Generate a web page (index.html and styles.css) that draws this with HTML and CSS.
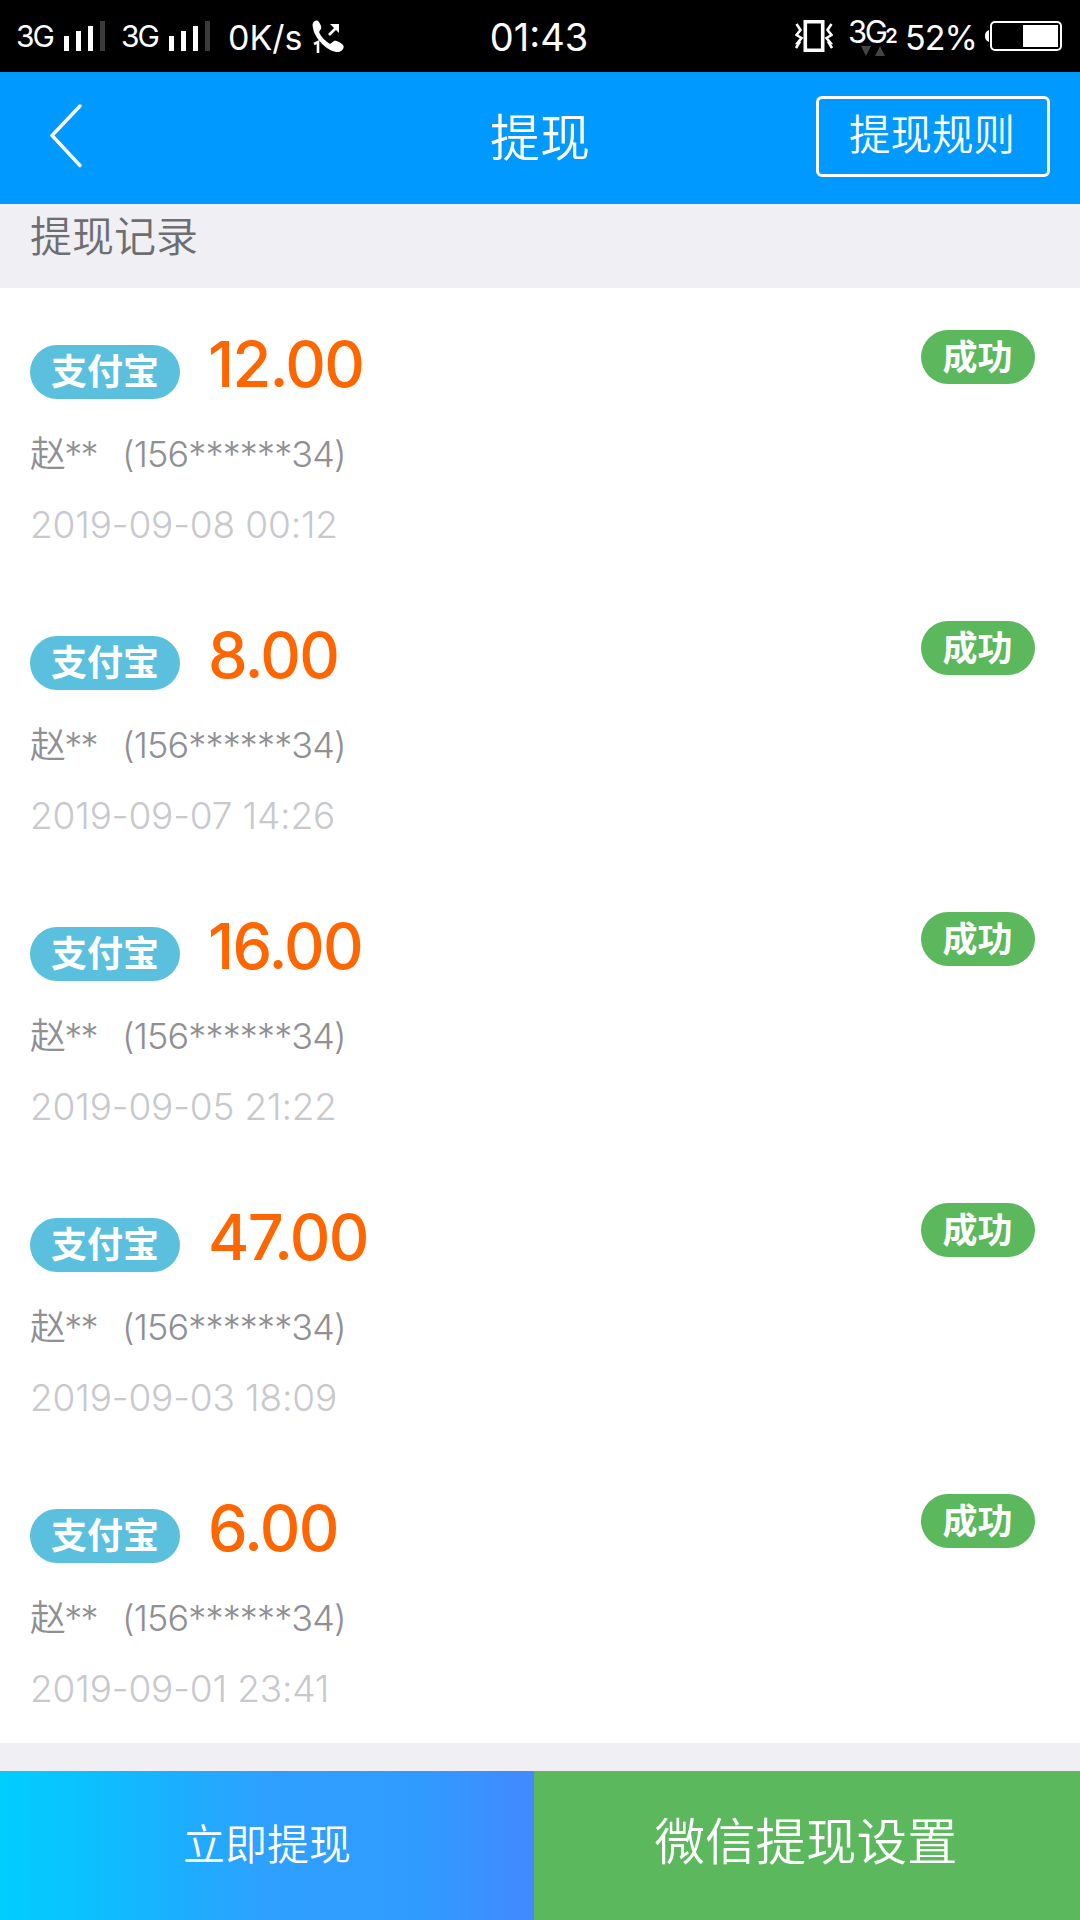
FILE: index.html
```html
<!DOCTYPE html>
<html lang="zh-CN">
<head>
<meta charset="utf-8">
<title>提现</title>
<link rel="stylesheet" href="styles.css">
</head>
<body>
<div class="status">
  <div class="status-left">
    <span class="net">3G</span>
    <svg class="bars" width="42" height="30" viewBox="0 0 42 30"><path fill="#fff" d="M0 15h5v15H0zM12 10h5v20h-5zM24 5h5v25h-5z"/><path fill="#3a3a3a" d="M36 0h5v30h-5z"/></svg>
    <span class="net">3G</span>
    <svg class="bars" width="42" height="30" viewBox="0 0 42 30"><path fill="#fff" d="M0 15h5v15H0zM12 10h5v20h-5zM24 5h5v25h-5z"/><path fill="#3a3a3a" d="M36 0h5v30h-5z"/></svg>
    <span class="speed">0K/s</span>
    <svg class="call" width="33" height="34" viewBox="0 0 33 34"><path fill="#fff" d="M1 3C2 1 4 0 6 1c2 2 4 6 3 8l-2 3c2 5 6 9 11 12l4-3c2-1 7 2 9 4 2 3-1 6-4 7C18 33 6 22 2 12 1 8 0 5 1 3z"/><path fill="none" stroke="#fff" stroke-width="2.6" d="M17 15l7-7"/><path fill="#fff" d="M18 4h9v9z"/><path fill="none" stroke="#fff" stroke-width="2.6" d="M2 24l4-2v11"/></svg>
  </div>
  <span class="clock">01:43</span>
  <div class="status-right">
    <svg class="vibrate" width="38" height="32" viewBox="0 0 38 32"><path fill="none" stroke="#fff" stroke-width="3.6" d="M10.3 1.8h17.4v28.4H10.3z"/><path fill="none" stroke="#fff" stroke-width="2.6" d="M1.500 4l4 6-4 5 5 3-4 5 1.500 0-3 5M36.500 4l-4 6 4 5-5 3 4 5-1.500 0 3 5"/></svg>
    <div class="sim"><span>3G</span><b>2</b><svg class="traffic" width="24" height="10" viewBox="0 0 24 10"><path fill="#444" d="M0 0h10L5 10zM14 10h10L19 0z"/></svg></div>
    <span class="percent">52%</span>
    <svg class="battery" width="77" height="32" viewBox="0 0 77 32"><rect x="6" y="2" width="70" height="28" rx="4" fill="none" stroke="#fff" stroke-width="2"/><path fill="#fff" d="M4 10v12C1 21 0 19 0 16s1-5 4-6zM38 5h35v22H38z"/></svg>
  </div>
</div>
<header class="nav">
  <svg class="back" width="34" height="64" viewBox="0 0 34 64"><path d="M31 2L3 31.500l28 30" fill="none" stroke="#fff" stroke-width="3.400" stroke-linecap="round"/></svg>
  <h1 class="title">提现</h1>
  <button class="rules">提现规则</button>
</header>
<h2 class="section">提现记录</h2>
<main class="records">
  <article class="record"><div class="line"><span class="badge pay">支付宝</span><span class="amount">12.00</span><span class="badge ok">成功</span></div><p class="account"><span class="name">赵**</span><span>(156******34)</span></p><time class="date">2019-09-08 00:12</time></article>
  <article class="record"><div class="line"><span class="badge pay">支付宝</span><span class="amount">8.00</span><span class="badge ok">成功</span></div><p class="account"><span class="name">赵**</span><span>(156******34)</span></p><time class="date">2019-09-07 14:26</time></article>
  <article class="record"><div class="line"><span class="badge pay">支付宝</span><span class="amount">16.00</span><span class="badge ok">成功</span></div><p class="account"><span class="name">赵**</span><span>(156******34)</span></p><time class="date">2019-09-05 21:22</time></article>
  <article class="record"><div class="line"><span class="badge pay">支付宝</span><span class="amount">47.00</span><span class="badge ok">成功</span></div><p class="account"><span class="name">赵**</span><span>(156******34)</span></p><time class="date">2019-09-03 18:09</time></article>
  <article class="record"><div class="line"><span class="badge pay">支付宝</span><span class="amount">6.00</span><span class="badge ok">成功</span></div><p class="account"><span class="name">赵**</span><span>(156******34)</span></p><time class="date">2019-09-01 23:41</time></article>
</main>
<footer class="actions">
  <button class="withdraw">立即提现</button>
  <button class="wechat">微信提现设置</button>
</footer>
</body>
</html>
```
FILE: styles.css
```css
* { box-sizing: border-box; }
body {
  margin: 0;
  width: 1080px;
  height: 1920px;
  overflow: hidden;
  display: flex;
  flex-direction: column;
  background: #efeff4;
  font-family: Inter, "Noto Sans CJK SC", sans-serif;
  font-weight: 300;
}
h1, h2, p { margin: 0; font-weight: 350; }
button { border: 0; margin: 0; padding: 0; color: #fff; font-family: inherit; font-weight: 350; }
svg { display: block; flex: none; }

.status {
  height: 72px;
  flex: none;
  display: grid;
  grid-template-columns: 1fr auto 1fr;
  background: #000;
  color: #fff;
  font-weight: 400;
  white-space: nowrap;
}
.status-left, .status-right { display: flex; align-items: flex-start; }
.status-left { padding-left: 16px; }
.status-right { justify-content: flex-end; padding-right: 18px; }
.net { width: 48px; font-size: 30px; line-height: 72px; letter-spacing: -2px; }
.bars { margin: 21px 15px 0 0; }
.speed { width: 86px; padding-left: 2px; font-size: 34px; line-height: 75px; }
.call { margin-top: 20px; }
.clock { font-size: 38px; line-height: 75px; padding-right: 2px; }
.vibrate { margin: 20px 15px 0 0; }
.sim { position: relative; width: 57px; display: flex; align-items: baseline; font-size: 31px; line-height: 63px; letter-spacing: -2.500px; }
.sim b { font-size: 20px; font-weight: 600; }
.traffic { position: absolute; left: 13px; top: 46px; }
.percent { width: 80px; font-size: 34px; line-height: 75px; letter-spacing: -1px; }
.battery { margin-top: 20px; }

.nav {
  height: 132px;
  flex: none;
  display: grid;
  grid-template-columns: 1fr auto 1fr;
  padding: 0 30px;
  background: #09f;
  color: #fff;
}
.back { margin: 32px 0 0 19px; }
.title { font-size: 50px; line-height: 132px; }
.rules {
  justify-self: end;
  width: 234px;
  height: 81px;
  margin-top: 24px;
  padding: 0 2px 3px 0;
  border: 3px solid #fff;
  border-radius: 6px;
  background: none;
  font-size: 41.500px;
  line-height: 70px;
}
.section {
  height: 84px;
  flex: none;
  padding-left: 30px;
  color: #6d6d72;
  font-size: 42px;
  line-height: 65px;
}

.records { height: 1455px; flex: none; background: #fff; }
.record { height: 291px; padding: 36px 45px 0 30px; }
.line { display: flex; height: 100px; }
.badge {
  height: 54px;
  border-radius: 27px;
  color: #fff;
  font-weight: 700;
  font-size: 36px;
  line-height: 55px;
  text-align: center;
}
.pay { width: 150px; margin-top: 21px; background: #5bc0de; }
.amount { margin-left: 28px; color: #f60; font-size: 63px; line-height: 80px; font-weight: 500; letter-spacing: -1.700px; }
.ok { width: 114px; margin: 6px 0 0 auto; padding-right: 1px; background: #5cb85c; font-size: 35px; line-height: 55px; }
.account { display: flex; height: 56px; color: #8f8f94; font-size: 36px; line-height: 60px; font-weight: 300; letter-spacing: -.850px; }
.name { width: 92px; font-weight: 350; letter-spacing: -1.700px; }
.date { display: block; color: #c8c8cd; font-size: 37px; line-height: 90px; letter-spacing: -.150px; }

.actions { display: grid; grid-template-columns: 534px 546px; height: 149px; margin-top: 28px; flex: none; }
.withdraw { font-size: 42px; padding-bottom: 9px; background: linear-gradient(to right, #00ceff, #0cc0ff 17%, #1eacff 36%, #2fa0ff 50%, #309bff 78%, #4289ff); }
.wechat { font-size: 50.500px; padding: 0 2px 16px 0; background: #5cb85c; }
```
